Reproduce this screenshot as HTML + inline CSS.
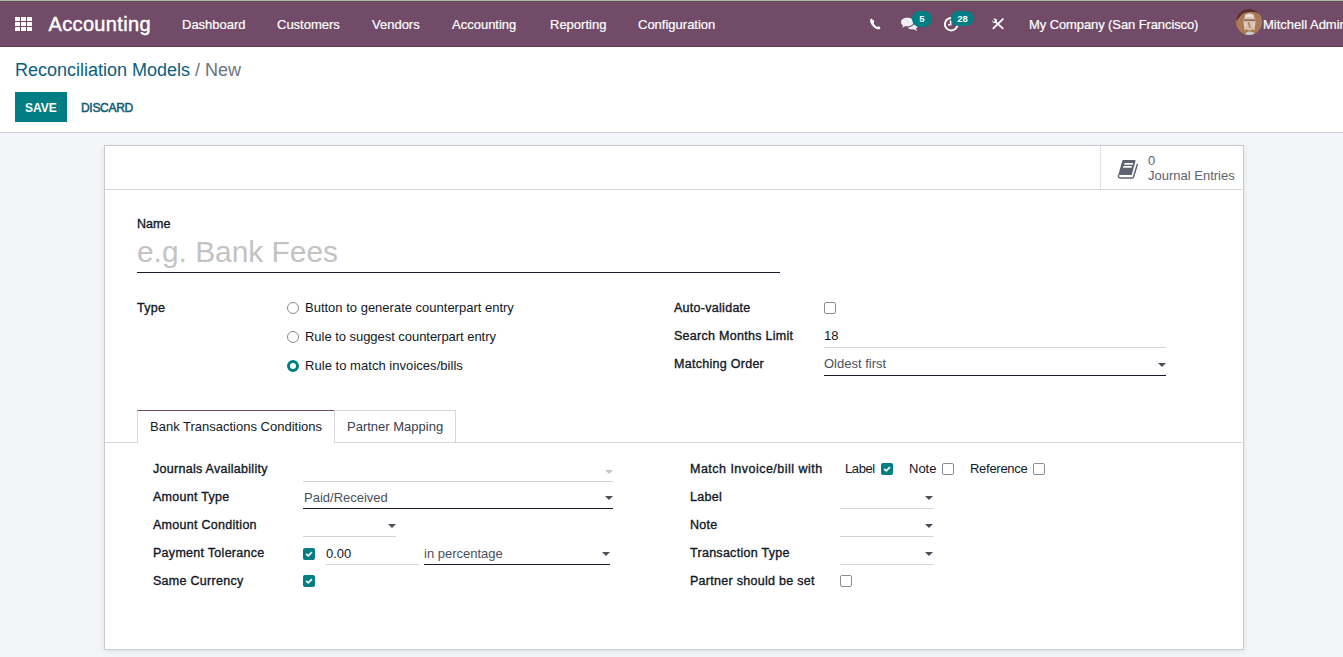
<!DOCTYPE html>
<html><head><meta charset="utf-8">
<style>
*{margin:0;padding:0;box-sizing:border-box}
html,body{width:1343px;height:657px;overflow:hidden;background:#f4f5f9;font-family:"Liberation Sans",sans-serif;color:#111827}
.a{position:absolute;white-space:nowrap}
.t13{font-size:13px;line-height:13px}
.b12{font-size:12px;line-height:12px;font-weight:bold}
#top{position:absolute;left:0;top:0;width:1343px;height:1px;background:#a3c1a1}
#nav{position:absolute;left:0;top:1px;width:1343px;height:46px;background:#714B67;border-bottom:1px solid #553a4f;border-top:1px solid #6d4563}
#nav .m{color:#fff;font-size:13px;line-height:13px;-webkit-text-stroke:0.2px #fff}
#cp{position:absolute;left:0;top:47px;width:1343px;height:86px;background:#fff;border-bottom:1px solid #c9cad2}
#sheet{position:absolute;left:104px;top:145px;width:1140px;height:505px;background:#fff;border:1px solid #c9cad2;box-shadow:0 2px 6px rgba(0,0,0,.08)}
.lbl{font-size:12.5px;line-height:12px;font-weight:normal;color:#111827;-webkit-text-stroke:0.35px #111827;letter-spacing:0.28px}
.ul{position:absolute;height:1px;background:#d1d3d8}
.uld{position:absolute;height:1px;background:#171c2c}
.arr{position:absolute;width:0;height:0;border-left:4px solid transparent;border-right:4px solid transparent;border-top:4px solid #4a4f5c}
.cb{position:absolute;width:12px;height:12px;border:1px solid #8a8d96;border-radius:2px;background:#fff}
.cbc{position:absolute;width:12px;height:12px;border-radius:2px;background:#017e84}
.rad{position:absolute;width:12px;height:12px;border:1px solid #8a8d96;border-radius:50%;background:#fff}
</style></head><body>
<div id="top"></div>
<div id="nav">
  <!-- grid icon -->
  <svg class="a" style="left:15px;top:15px" width="17" height="14" viewBox="0 0 17 14">
    <g fill="#fff">
      <rect x="0" y="0" width="5" height="4" rx=".5"/><rect x="6" y="0" width="5" height="4" rx=".5"/><rect x="12" y="0" width="5" height="4" rx=".5"/>
      <rect x="0" y="5" width="5" height="4" rx=".5"/><rect x="6" y="5" width="5" height="4" rx=".5"/><rect x="12" y="5" width="5" height="4" rx=".5"/>
      <rect x="0" y="10" width="5" height="4" rx=".5"/><rect x="6" y="10" width="5" height="4" rx=".5"/><rect x="12" y="10" width="5" height="4" rx=".5"/>
    </g>
  </svg>
  <span class="a" style="left:48.5px;top:12px;font-size:20px;line-height:20px;font-weight:normal;color:#fff;letter-spacing:0.35px;-webkit-text-stroke:0.45px #fff">Accounting</span>
  <span class="a m" style="left:182px;top:16px">Dashboard</span>
  <span class="a m" style="left:277px;top:16px">Customers</span>
  <span class="a m" style="left:372px;top:16px">Vendors</span>
  <span class="a m" style="left:452px;top:16px">Accounting</span>
  <span class="a m" style="left:550px;top:16px">Reporting</span>
  <span class="a m" style="left:638px;top:16px">Configuration</span>

  <!-- phone -->
  <svg class="a" style="left:868px;top:14px" width="16" height="16" viewBox="0 0 16 16">
    <path d="M3.2 2.6 C2.2 3.4 1.9 4.6 2.4 6.2 C3.4 9.2 5.8 11.9 8.9 13 C10.3 13.5 11.6 13.4 12.6 12.4 L11.3 10.6 C11 10.2 10.5 10.1 10.1 10.4 L9.2 10.9 C7.6 10 6.3 8.6 5.5 6.9 L6.1 6 C6.4 5.6 6.3 5.1 6 4.8 Z" fill="#fff"/>
  </svg>
  <!-- comments -->
  <svg class="a" style="left:900px;top:15px" width="19" height="15" viewBox="0 0 19 15">
    <path d="M7.3 0.8 C11 0.8 13.6 2.6 13.6 5 C13.6 7.4 11 9.3 7.3 9.3 C6.6 9.3 5.9 9.2 5.3 9.1 L2.2 11 L3 8.4 C1.6 7.6 1 6.4 1 5 C1 2.6 3.6 0.8 7.3 0.8 Z" fill="#f0eef0"/>
    <path d="M14.3 4.6 C16.5 5.3 17.9 6.8 17.9 8.5 C17.9 9.7 17.2 10.7 16.1 11.4 L16.9 13.9 L13.7 12.3 C13.2 12.4 12.7 12.4 12.2 12.4 C10.2 12.4 8.5 11.7 7.6 10.5 C11.4 10.3 14.5 8.2 14.5 5.2 Z" fill="#f0eef0"/>
  </svg>
  <div class="a" style="left:912px;top:9px;width:20px;height:16px;border-radius:8px;background:#017e84"></div>
  <span class="a" style="left:912px;top:12px;width:20px;text-align:center;font-size:9.5px;line-height:10px;font-weight:bold;color:#fff">5</span>
  <!-- clock -->
  <svg class="a" style="left:942px;top:13px" width="18" height="18" viewBox="0 0 18 18">
    <circle cx="9.2" cy="9.2" r="6.3" fill="none" stroke="#fff" stroke-width="2"/>
    <path d="M8.6 5.5 V9.8 H6" fill="none" stroke="#fff" stroke-width="1.6"/>
  </svg>
  <div class="a" style="left:951px;top:9px;width:23px;height:15px;border-radius:7.5px;background:#017e84"></div>
  <span class="a" style="left:951px;top:12px;width:23px;text-align:center;font-size:9.5px;line-height:10px;font-weight:bold;color:#fff">28</span>
  <!-- tools -->
  <svg class="a" style="left:990.5px;top:13px" width="14" height="15.75" viewBox="0 0 16 18">
    <path d="M2.6 15.4 L13.6 4.6" stroke="#fff" stroke-width="2" stroke-linecap="round"/>
    <path d="M5.5 8.2 L13.4 15.2" stroke="#fff" stroke-width="2" stroke-linecap="round"/>
    <circle cx="4.2" cy="6.6" r="2.7" fill="#fff"/>
    <path d="M1 2.8 L4.8 6.6 L3.4 8 L-0.4 4.2 Z" fill="#714B67"/>
  </svg>
  <!-- avatar -->
  <div class="a" style="left:1236px;top:7px;width:26px;height:26px;border-radius:50%;overflow:hidden"><svg style="display:block" width="26" height="26" viewBox="0 0 26 26">
    <g>
      <rect width="26" height="26" fill="#a97a55"/>
      <path d="M0 0 H26 V7 Q20 2 13 3 Q6 3 3 9 L0 12 Z" fill="#5e2a30"/>
      <ellipse cx="13.5" cy="13" rx="6" ry="8.5" fill="#d9c0b0"/>
      <path d="M9 6 Q13 3 18 6 L17 9 Q13 7 9 9 Z" fill="#e8dcd8"/>
      <rect x="8" y="10.5" width="11" height="1.3" fill="#7a4a48"/>
      <path d="M9 14 V21 M18 14 V21" stroke="#e6dcdc" stroke-width="1.2"/>
      <path d="M12.5 13 L14 19" stroke="#b08060" stroke-width="1.5"/>
      <ellipse cx="14" cy="26" rx="5" ry="3.5" fill="#c8ccd0"/>
    </g>
  </svg></div>
  <span class="a m" style="left:1029px;top:16px;letter-spacing:-0.1px">My Company (San Francisco)</span>
  <span class="a m" style="left:1263px;top:16px">Mitchell Admin</span>
</div>
<div id="cp">
  <span class="a" style="left:15px;top:14px;font-size:18px;line-height:18px;color:#0a5e7e">Reconciliation Models <span style="color:#6b7280">/ New</span></span>
  <div class="a" style="left:15px;top:45px;width:52px;height:30px;background:#017e84"></div>
  <span class="a b12" style="left:25px;top:55px;color:#fff">SAVE</span>
  <span class="a" style="left:81px;top:55px;color:#0f5a7a;font-size:12px;line-height:12px;-webkit-text-stroke:0.5px #0f5a7a;letter-spacing:-0.3px">DISCARD</span>
</div>
<div id="sheet"></div>
<div id="form">
  <!-- button box -->
  <div class="a" style="left:105px;top:189px;width:1138px;height:1px;background:#d5d7dd"></div>
  <div class="a" style="left:1100px;top:146px;width:1px;height:43px;background:repeating-linear-gradient(to bottom,#d3d5db 0 1px,#f3f4f6 1px 2px)"></div>
  <svg class="a" style="left:1116px;top:159px" width="23" height="21" viewBox="0 0 23 21">
    <path d="M6.9 1.1 L18.8 1.1 Q19.8 1.1 19.5 2.1 L15.9 15.2 Q15.6 16.1 14.7 16.1 L2.3 16.1 L6.3 1.8 Q6.5 1.1 6.9 1.1 Z" fill="#5f6270"/>
    <path d="M2.6 16 Q1.9 18.9 4.2 18.9 L16.3 18.9 Q17.2 18.9 17.5 18 L21.5 4.9" fill="none" stroke="#5f6270" stroke-width="1.5"/>
    <path d="M8.6 4.1 H17.1 L16.7 5.7 H8.2 Z" fill="#fff"/>
    <path d="M7.5 7.1 H16 L15.6 8.8 H7.1 Z" fill="#fff"/>
  </svg>
  <span class="a t13" style="left:1148px;top:154px;color:#5f6270">0</span>
  <span class="a t13" style="left:1148px;top:169px;color:#5f6270">Journal Entries</span>

  <span class="a lbl" style="left:137px;top:218px;letter-spacing:0">Name</span>
  <span class="a" style="left:137px;top:237px;font-size:29.9px;line-height:30px;color:#c3c3c3">e.g. Bank Fees</span>
  <div class="uld" style="left:137px;top:272px;width:643px"></div>

  <span class="a lbl" style="left:137px;top:302px">Type</span>
  <div class="rad" style="left:287px;top:302px"></div>
  <div class="rad" style="left:287px;top:331px"></div>
  <div class="rad" style="left:287px;top:360px;border:3.5px solid #017e84"></div>
  <span class="a t13" style="left:305px;top:301px">Button to generate counterpart entry</span>
  <span class="a t13" style="left:305px;top:330px;letter-spacing:-0.04px">Rule to suggest counterpart entry</span>
  <span class="a t13" style="left:305px;top:359px;letter-spacing:0.04px">Rule to match invoices/bills</span>

  <span class="a lbl" style="left:674px;top:302px">Auto-validate</span>
  <div class="cb" style="left:824px;top:302px"></div>
  <span class="a lbl" style="left:674px;top:330px">Search Months Limit</span>
  <span class="a t13" style="left:824px;top:329px">18</span>
  <div class="ul" style="left:824px;top:347px;width:342px"></div>
  <span class="a lbl" style="left:674px;top:358px">Matching Order</span>
  <span class="a t13" style="left:824px;top:357px;color:#4b5060">Oldest first</span>
  <div class="arr" style="left:1158px;top:363px"></div>
  <div class="uld" style="left:824px;top:375px;width:342px"></div>

  <!-- notebook -->
  <div class="a" style="left:105px;top:442px;width:1138px;height:1px;background:#d5d7dd"></div>
  <div class="a" style="left:137px;top:410px;width:198px;height:33px;background:#fff;border:1px solid #d5d7dd;border-top:1px solid #714B67;border-bottom:none"></div>
  <div class="a" style="left:334px;top:410px;width:122px;height:32px;background:#fff;border:1px solid #d5d7dd;border-bottom:none"></div>
  <span class="a t13" style="left:150px;top:420px">Bank Transactions Conditions</span>
  <span class="a t13" style="left:347px;top:420px;color:#374151">Partner Mapping</span>

  <span class="a lbl" style="left:153px;top:463px">Journals Availability</span>
  <div class="arr" style="left:605px;top:470px;border-top-color:#c8c8c8"></div>
  <div class="ul" style="left:303px;top:481px;width:310px"></div>
  <span class="a lbl" style="left:153px;top:491px">Amount Type</span>
  <span class="a t13" style="left:304px;top:491px;color:#4b5060">Paid/Received</span>
  <div class="arr" style="left:605px;top:496px"></div>
  <div class="uld" style="left:303px;top:508px;width:310px"></div>
  <span class="a lbl" style="left:153px;top:519px">Amount Condition</span>
  <div class="arr" style="left:388px;top:524px"></div>
  <div class="ul" style="left:303px;top:536px;width:93px"></div>
  <span class="a lbl" style="left:153px;top:547px">Payment Tolerance</span>
  <div class="cbc" style="left:303px;top:548px"><svg width="12" height="12" viewBox="0 0 12 12" style="position:absolute;left:0;top:0"><path d="M3.1 6 L5.3 7.9 L8.9 4.1" fill="none" stroke="#fff" stroke-width="1.7"/></svg></div>
  <span class="a t13" style="left:326px;top:547px">0.00</span>
  <div class="ul" style="left:326px;top:564px;width:93px"></div>
  <span class="a t13" style="left:424px;top:547px;color:#4b5060">in percentage</span>
  <div class="arr" style="left:602px;top:552px"></div>
  <div class="uld" style="left:424px;top:564px;width:186px"></div>
  <span class="a lbl" style="left:153px;top:575px">Same Currency</span>
  <div class="cbc" style="left:303px;top:575px"><svg width="12" height="12" viewBox="0 0 12 12" style="position:absolute;left:0;top:0"><path d="M3.1 6 L5.3 7.9 L8.9 4.1" fill="none" stroke="#fff" stroke-width="1.7"/></svg></div>

  <span class="a lbl" style="left:690px;top:463px;letter-spacing:0.48px">Match Invoice/bill with</span>
  <span class="a t13" style="left:845px;top:462px;letter-spacing:-0.4px">Label</span>
  <div class="cbc" style="left:881px;top:463px"><svg width="12" height="12" viewBox="0 0 12 12" style="position:absolute;left:0;top:0"><path d="M3.1 6 L5.3 7.9 L8.9 4.1" fill="none" stroke="#fff" stroke-width="1.7"/></svg></div>
  <span class="a t13" style="left:909px;top:462px">Note</span>
  <div class="cb" style="left:942px;top:463px"></div>
  <span class="a t13" style="left:970px;top:462px;letter-spacing:-0.28px">Reference</span>
  <div class="cb" style="left:1033px;top:463px"></div>
  <span class="a lbl" style="left:690px;top:491px">Label</span>
  <div class="arr" style="left:925px;top:496px"></div>
  <div class="ul" style="left:840px;top:508px;width:93px"></div>
  <span class="a lbl" style="left:690px;top:519px">Note</span>
  <div class="arr" style="left:925px;top:524px"></div>
  <div class="ul" style="left:840px;top:536px;width:93px"></div>
  <span class="a lbl" style="left:690px;top:547px">Transaction Type</span>
  <div class="arr" style="left:925px;top:552px"></div>
  <div class="ul" style="left:840px;top:564px;width:93px"></div>
  <span class="a lbl" style="left:690px;top:575px">Partner should be set</span>
  <div class="cb" style="left:840px;top:575px"></div>
</div>
</body></html>
